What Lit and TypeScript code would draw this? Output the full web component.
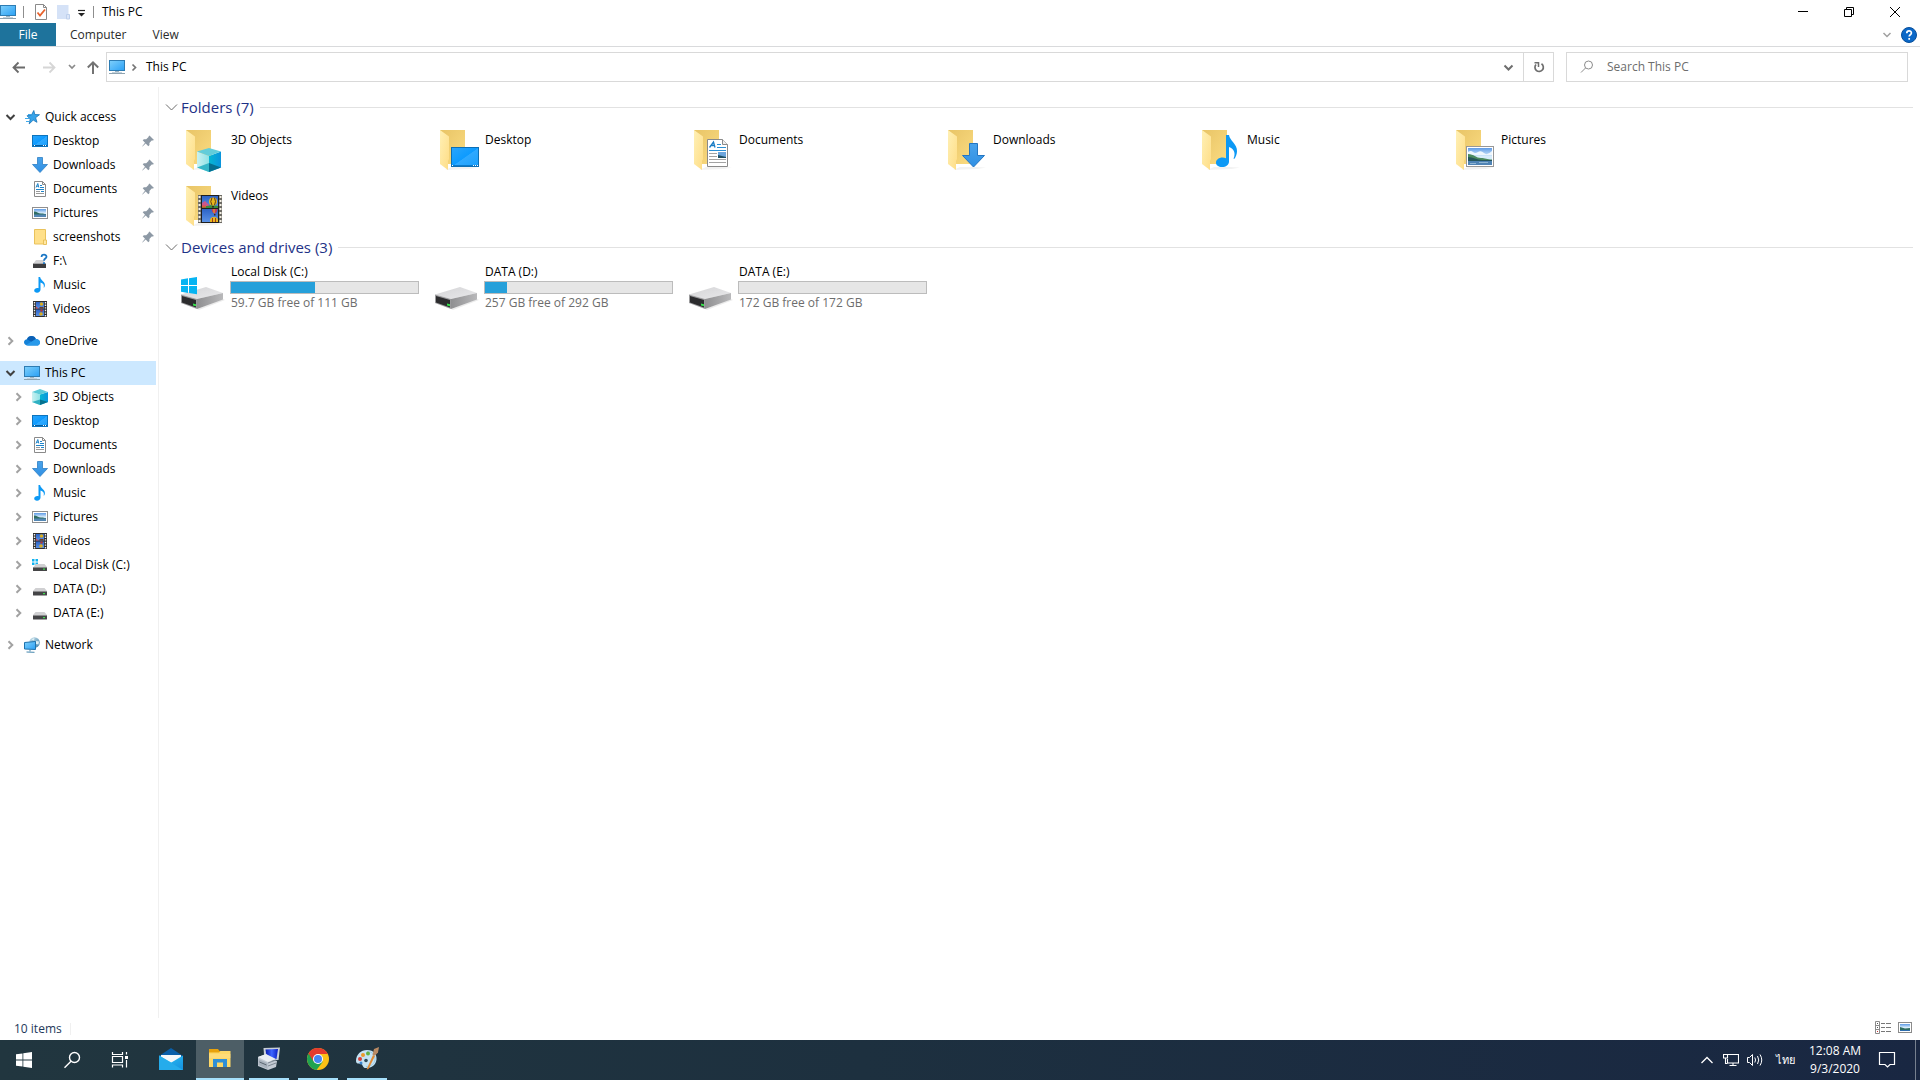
import { LitElement, html, svg, css } from "lit";
import { customElement } from "lit/decorators.js";
import { classMap } from "lit/directives/class-map.js";

/* ---------- shared drawings ---------- */

const defs = html`<svg class="defs" width="0" height="0" aria-hidden="true">
  <defs>
    <linearGradient id="screen" x1="0" y1="0" x2="1" y2="1"><stop offset="0" stop-color="#7fd0fb" /><stop offset="1" stop-color="#2aa0f5" /></linearGradient>
    <linearGradient id="flap" x1="0" y1="0" x2="1" y2="1"><stop offset="0" stop-color="#fff0b5" /><stop offset="1" stop-color="#fedd86" /></linearGradient>
    <linearGradient id="back" x1="0" y1="0" x2="1" y2="1"><stop offset="0" stop-color="#e8c466" /><stop offset="1" stop-color="#fbdc82" /></linearGradient>
    <linearGradient id="desk" x1="0" y1="0" x2="1" y2="1"><stop offset="0" stop-color="#2ba5fb" /><stop offset=".5" stop-color="#0d9bff" /><stop offset=".52" stop-color="#2fa9ff" /><stop offset="1" stop-color="#1a9ffc" /></linearGradient>
    <linearGradient id="cubeL" x1="0" y1="0" x2="1" y2="0"><stop offset="0" stop-color="#c9f1f1" /><stop offset="1" stop-color="#8fe2e6" /></linearGradient>
    <linearGradient id="cubeR" x1="0" y1="0" x2="1" y2="0"><stop offset="0" stop-color="#06b7d2" /><stop offset="1" stop-color="#0a94dd" /></linearGradient>
    <linearGradient id="arrow" x1="0" y1="0" x2="0" y2="1"><stop offset="0" stop-color="#4aa3ea" /><stop offset="1" stop-color="#2f8fe4" /></linearGradient>
    <linearGradient id="sky" x1="0" y1="0" x2="0" y2="1"><stop offset="0" stop-color="#5e9be6" /><stop offset=".5" stop-color="#d9edfb" /><stop offset="1" stop-color="#cfe6f5" /></linearGradient>
    <linearGradient id="film" x1="0" y1="0" x2="0" y2="1"><stop offset="0" stop-color="#2c63c6" /><stop offset="1" stop-color="#5b92e6" /></linearGradient>
    <linearGradient id="diskTop" x1="0" y1="0" x2="1" y2="1"><stop offset="0" stop-color="#d4d4d6" /><stop offset="1" stop-color="#e9e9eb" /></linearGradient>
    <linearGradient id="diskSide" x1="0" y1="0" x2="1" y2="0"><stop offset="0" stop-color="#8f8f91" /><stop offset="1" stop-color="#b9b9bb" /></linearGradient>
    <linearGradient id="mailL" x1="0" y1="0" x2="1" y2="1"><stop offset="0" stop-color="#2fc3f4" /><stop offset="1" stop-color="#1490df" /></linearGradient>
    <linearGradient id="crt" x1="0" y1="0" x2="1" y2="0"><stop offset="0" stop-color="#0a1cae" /><stop offset=".5" stop-color="#3e66ff" /><stop offset="1" stop-color="#0b20c4" /></linearGradient>
    <linearGradient id="globe" x1="0" y1="0" x2="1" y2="1"><stop offset="0" stop-color="#cfe6ef" /><stop offset="1" stop-color="#3c7fa8" /></linearGradient>
  </defs>
</svg>`;

const icon = (size: number, body: unknown, cls = "") =>
  html`<svg class=${"icon " + cls} width=${size} height=${size} viewBox="0 0 ${size} ${size}" aria-hidden="true">${body}</svg>`;

const small: Record<string, unknown> = {
  pc: svg`<rect x=".5" y="1.5" width="15" height="10" fill="url(#screen)" stroke="#2d7cb3"/><rect x="6" y="12" width="4" height="1" fill="#9fb4c2"/><rect x="3" y="13" width="10" height="1" fill="#c3d2dc"/><rect x="0" y="14" width="16" height="1" fill="#8fa3b0"/>`,
  star: svg`<path d="M9.800 1.500l1 4 4.700.2-3.900 3 1.400 4.600-3.800-2.200-4 3.800 1-4.900L3 6.800l4.600-1z" fill="#35a3ea" stroke="#1674b8" stroke-width=".8"/><path d="M1 9.500h4M2 12.500h3M4 5.500h3" stroke="#3fa9ea"/>`,
  desktop: svg`<rect x=".5" y="2.500" width="15" height="11" fill="url(#desk)" stroke="#0d74bd"/><path d="M1 12.500h14" stroke="#075c9c"/><path d="M2 12.500h1M11 12.500h1M13 12.500h1" stroke="#fff"/>`,
  downloads: svg`<path d="M5.500.5h5v7h5L8 15.500.5 7.500h5z" fill="url(#arrow)" stroke="#2d7fc4" stroke-width=".8"/>`,
  documents: svg`<path d="M2.500.5h8l3 3v12h-11z" fill="#fff" stroke="#8a8a8a"/><path d="M10.500.5v3h3" fill="none" stroke="#8a8a8a"/><path d="M4 6.500L5.800 2.500l1 4M4.600 5.200h2.200M8 4.500h2M8 6.500h4M4 8.500h8M9 10.500h3" stroke="#1f84c9" fill="none"/><path d="M4 10.500h4M4 12.500h8" stroke="#9a9a9a"/>`,
  pictures: svg`<rect x=".5" y="2.500" width="15" height="11" fill="#fff" stroke="#8f8f8f"/><rect x="2" y="4" width="12" height="8" fill="url(#sky)"/><path d="M2 6.500c3 0 4 2 7 2s3 .5 5 .5v1H2z" fill="#2f6d62"/><rect x="2" y="9.500" width="12" height="2.500" fill="#5487b4"/>`,
  folder: svg`<path d="M2.500 0.500h11v14.500h-11z" fill="#ffe08a" stroke="#e9c25c"/><path d="M11.500 15.500v-4.500h3v4.500z" fill="#ffe8a6" stroke="#e9c25c"/>`,
  unknown: svg`<path d="M4 7h7l3 4H1z" fill="#d3d3d5"/><rect x="1" y="11" width="13" height="4" fill="#3d3d3f"/><path d="M1 10.500h13" stroke="#a7a7a9"/><path d="M9.500 4c0-3 5-3 5-.3 0 2-2.500 1.800-2.500 4M12 9.200v1.800" stroke="#1b77c5" stroke-width="1.800" fill="none"/>`,
  music: svg`<path d="M6.500 0h1.600c.6 3.800 5.200 4.500 4.800 8.200-.1 1.300-.7 2.200-1.200 2.600.8-2.800-.6-4.400-3.200-5.200v7c0 2-1.500 3.200-3.500 3.200-1.700 0-2.800-.9-2.800-2.200 0-1.500 1.600-2.700 3.300-2.600.4 0 .7 0 1 .2z" fill="#0d99f5"/>`,
  videos: svg`<rect x="1" y="0" width="14" height="16" fill="#2e2e2e"/><rect x="4" y="1" width="8" height="6.500" fill="url(#film)"/><rect x="4" y="8.500" width="8" height="6.500" fill="url(#film)"/><circle cx="9.500" cy="3" r="1.800" fill="#d8ad22"/><path d="M4 5.500l2.500 2H4z" fill="#d8454a"/><path d="M7.500 6h4v1.500h-4z" fill="#6d3b22"/><circle cx="9" cy="13" r="1.800" fill="#d8ad22"/><circle cx="9.500" cy="9.500" r="1.300" fill="#a83a3b"/><path d="M2.500 1v15M13.500 1v15" stroke="#f2f2f2" stroke-width="1.400" stroke-dasharray="1.400 1.200"/>`,
  cloud: svg`<path d="M4 12.500C1.500 12.500 0 11.200 0 9.300 0 7.500 1.300 6.300 3 6.200 3.800 4 5.500 3 7.500 3c2 0 3.700 1.200 4.300 3 2.400 0 4.200 1.400 4.200 3.400s-1.500 3.100-3.300 3.100z" fill="#1482d8"/><path d="M3 6.200C3.800 4 5.500 3 7.500 3c2 0 3.700 1.200 4.300 3L8 9z" fill="#0b5fb4"/><path d="M2 12L11.800 6c2.400 0 4.200 1.400 4.200 3.400s-1.500 3.100-3.300 3.100H4c-.8 0-1.400-.2-2-.5z" fill="#2899ea"/>`,
  cube: svg`<path d="M0 3L8 5.500V16L0 13z" fill="url(#cubeL)"/><path d="M16 3L8 5.500V16l8-3z" fill="url(#cubeR)"/><path d="M0 3l8-3 8 3-8 2.500z" fill="#5bcbd8"/><path d="M0 13l8-2.500V16z" fill="#2fb0c2"/><path d="M16 13l-8-2.500V16z" fill="#05718f"/>`,
  cdrive: svg`<path d="M0 2h2.500v2.500H0zM3.500 2H6v2.500H3.500zM0 5.500h2.500V8H0zM3.500 5.500H6V8H3.500z" fill="#12b3f0"/><path d="M4 7h8.500l2.500 3H1.500z" fill="#d0d0d2"/><rect x="1" y="10" width="14" height="4" rx=".5" fill="#444446"/><path d="M1 10.500h14" stroke="#8c8c8e"/><rect x="11" y="11.500" width="2" height="1.200" fill="#3de04c"/>`,
  drive: svg`<path d="M3.500 7h9l2.500 3H1z" fill="#d0d0d2"/><rect x="1" y="10" width="14" height="4.500" rx=".5" fill="#444446"/><path d="M1 10.500h14" stroke="#8c8c8e"/><rect x="11" y="12" width="2" height="1.200" fill="#3de04c"/>`,
  network: svg`<circle cx="10.500" cy="5.500" r="5.300" fill="url(#globe)"/><path d="M7.500 2.500c1-1 2-1.500 3-1.500l-.5 2.500zM12 4l3 .5-.5 3L12 7z" fill="#dff0f5"/><path d="M.5 5.500l11-1v8l-11-.5z" fill="url(#screen)" stroke="#1d72ad"/><path d="M6 12.500v2M2.500 15l8 .300" stroke="#4587ad"/>`,
};

const pin = svg`<path d="M9.500 2.500L14 7l-1.300.6-1-.2-2.300 2.500.1 2.100-1.200 1.200-2.600-2.600L2.500 13.500l-.3-.3L5 9.800 2.700 7.300l1.200-1.100 2.300.1L8.500 4.100 8.700 3.200z" fill="#8d99a5"/>`;
const chevRight = svg`<path d="M5.500 4.200L9.300 8l-3.800 3.800" fill="none" stroke="#a2a2a2" stroke-width="2"/>`;
const chevDown = svg`<path d="M3.500 6l4 4 4-4" fill="none" stroke="#404040" stroke-width="2"/>`;
const chevThin = svg`<path d="M3 5.500L8.500 11 14 5.500" fill="none" stroke="#6d6d6d"/>`;

/* Folder tiles: an open folder with a badge drawn over its lower right. */
const folderBase = svg`<path d="M12 44l7-3h16l10 .5-8 1.500z" fill="#000" opacity=".05"/><path d="M7 4h25v34H12z" fill="url(#back)"/><path d="M7 4l9 6.500V33l-1 2v9l-8-6z" fill="url(#flap)"/>`;
const badge: Record<string, unknown> = {
  cube: svg`<path d="M18 25.500L30 30v16l-12-4.500z" fill="url(#cubeL)"/><path d="M42 25.500L30 30v16l12-4.500z" fill="url(#cubeR)"/><path d="M18 25.500L30 22l12 3.500L30 30z" fill="#62cdda"/><path d="M18 41.500L30 37v9z" fill="#35b7c8"/><path d="M42 41.500L30 37v9z" fill="#056f90"/>`,
  desktop: svg`<rect x="18.500" y="21.500" width="27" height="19" fill="url(#desk)" stroke="#0d6fb5"/><path d="M19 39.500h26" stroke="#0b7acb"/><path d="M19 39.500h1M40 39.500h1M42 39.500h1M44 39.500h1" stroke="#fff"/>`,
  documents: svg`<path d="M20.500 13.500h15l5 5v22h-20z" fill="#fff" stroke="#8a8a8a"/><path d="M35.500 13.500v5h5" fill="#eee" stroke="#8a8a8a"/><path d="M22.500 21.500l4-5.500 1.500 5.500M24.500 19.500h3" stroke="#1a7cc4" stroke-width="1.300" fill="none"/><path d="M30 18.500h4M30 21.500h9M22 24.500h17" stroke="#2a8fd4"/><path d="M22 27.500h8M22 30.500h8M22 33.500h17M22 36.500h17" stroke="#a3a3a3"/><rect x="31" y="26" width="8" height="6" fill="#6da5dc"/><path d="M31 29l8 2v1h-8z" fill="#1f4f63"/>`,
  downloads: svg`<path d="M28.500 17.500h8v12h7L32.500 41 21.500 29.500h7z" fill="url(#arrow)" stroke="#2476c2"/>`,
  music: svg`<path d="M31 9h3c.5 5.500 8.500 9 8 16.500-.1 2.800-1.200 5.500-2.800 7.500l-.7-.5c2.500-5 .5-10-4.500-11.500V35.500c0 3.500-3 5.500-7 5.500-3.500 0-6-1.700-6-4.300 0-3 3-5.200 6.500-5.200 1.400 0 2.600.2 3.500.7z" fill="#0d99f5"/>`,
  pictures: svg`<rect x="17.500" y="20.500" width="27" height="20" fill="#fff" stroke="#979797"/><rect x="19" y="22" width="24" height="17" fill="url(#sky)"/><path d="M19 26q3-2 5 0t5 0 6 1 8-2v4H19z" fill="#eef6fd"/><path d="M19 28c6 0 8 4 13 4 4 0 6 1.500 11 1.500V36H19z" fill="#4b8a5e"/><path d="M19 31c5 0 9 3 14 3h10v1.500H19z" fill="#25565a"/><rect x="19" y="35" width="24" height="4" fill="#4f83b4"/><path d="M21 37.500h6M30 36.500h9" stroke="#8db4d3"/>`,
  videos: svg`<rect x="19" y="13" width="24" height="28" fill="#6c6a64"/><rect x="22" y="13" width="18" height="28" fill="#1f1f1f"/><rect x="23" y="14" width="16" height="12" fill="url(#film)"/><rect x="23" y="27" width="16" height="13" fill="url(#film)"/><path d="M23 21l3-2 4 4 2 3h-9z" fill="#c9568e"/><path d="M23 24h5l5-1 6 1v2H23z" fill="#3b8c3e"/><path d="M23 23.500h4v2h-4z" fill="#e05a3a"/><circle cx="34" cy="19.500" r="4" fill="#e9b71d"/><path d="M33 15.700q-2.500 4 0 7.500M35.500 15.700q2 4 0 7.500" stroke="#5e3a1a" fill="none"/><path d="M33 24h2v1.500h-2z" fill="#3a2a1a"/><path d="M32.500 27h6q0 3-3 5-3-2-3-5z" fill="#c23b5a"/><path d="M35 27v4" stroke="#e9b71d"/><path d="M35 32h1.500v1.500H35z" fill="#3a2a1a"/><path d="M31 40q-.5-5 4-5t4 5z" fill="#e9b71d"/><path d="M33.500 36v4M36.500 36v4" stroke="#a33a1a"/><path d="M20.500 14v27M41.500 14v27" stroke="#f4f0e4" stroke-width="2" stroke-dasharray="2 2"/>`,
};

const winLogo = svg`<path d="M2 14.500l7-1.200V20H2zM10 13.200l8-1.200v8h-8zM2 21h7v7l-7-1.200zM10 21h8v8.200l-8-1.200z" fill="#06b4f2"/>`;
const diskArt = svg`<path d="M18 44l26-10 2 1-26 10z" fill="#000" opacity=".08"/><path d="M2 29.500L27 22l17 6-26 6z" fill="url(#diskTop)"/><path d="M18 34l26-6v6.500L18 44z" fill="url(#diskSide)"/><path d="M2 29.500L18 34v10L2 38z" fill="#9b9b9d"/><path d="M3 31l14 4v7.500L3 37.500z" fill="#2c2c2e"/><path d="M14 38.500l3 .8v2l-3-.9z" fill="#35e24a"/>`;

/* ---------- data ---------- */

interface NavEntry { label: string; art: string; level: 0 | 1; toggle?: "open" | "closed"; pinned?: boolean; selected?: boolean; }
const navGroups: NavEntry[][] = [
  [
    { label: "Quick access", art: "star", level: 0, toggle: "open" },
    { label: "Desktop", art: "desktop", level: 1, pinned: true },
    { label: "Downloads", art: "downloads", level: 1, pinned: true },
    { label: "Documents", art: "documents", level: 1, pinned: true },
    { label: "Pictures", art: "pictures", level: 1, pinned: true },
    { label: "screenshots", art: "folder", level: 1, pinned: true },
    { label: "F:\\", art: "unknown", level: 1 },
    { label: "Music", art: "music", level: 1 },
    { label: "Videos", art: "videos", level: 1 },
  ],
  [{ label: "OneDrive", art: "cloud", level: 0, toggle: "closed" }],
  [
    { label: "This PC", art: "pc", level: 0, toggle: "open", selected: true },
    { label: "3D Objects", art: "cube", level: 1, toggle: "closed" },
    { label: "Desktop", art: "desktop", level: 1, toggle: "closed" },
    { label: "Documents", art: "documents", level: 1, toggle: "closed" },
    { label: "Downloads", art: "downloads", level: 1, toggle: "closed" },
    { label: "Music", art: "music", level: 1, toggle: "closed" },
    { label: "Pictures", art: "pictures", level: 1, toggle: "closed" },
    { label: "Videos", art: "videos", level: 1, toggle: "closed" },
    { label: "Local Disk (C:)", art: "cdrive", level: 1, toggle: "closed" },
    { label: "DATA (D:)", art: "drive", level: 1, toggle: "closed" },
    { label: "DATA (E:)", art: "drive", level: 1, toggle: "closed" },
  ],
  [{ label: "Network", art: "network", level: 0, toggle: "closed" }],
];

const folders = [
  { label: "3D Objects", art: "cube" },
  { label: "Desktop", art: "desktop" },
  { label: "Documents", art: "documents" },
  { label: "Downloads", art: "downloads" },
  { label: "Music", art: "music" },
  { label: "Pictures", art: "pictures" },
  { label: "Videos", art: "videos" },
];

const drives = [
  { label: "Local Disk (C:)", free: "59.7 GB free of 111 GB", used: 45, system: true },
  { label: "DATA (D:)", free: "257 GB free of 292 GB", used: 12, system: false },
  { label: "DATA (E:)", free: "172 GB free of 172 GB", used: 0, system: false },
];

const apps = [
  {
    label: "Mail", state: "",
    body: svg`<path d="M0 8L12 0l12 8v3H0z" fill="#0a5ea8"/><path d="M2 7h20v4l-10 5L2 11z" fill="#f5f7f9"/><path d="M0 7.500l14 8L6 22H0z" fill="#31bff3"/><path d="M24 7.500L0 22h24z" fill="url(#mailL)"/><path d="M0 7.500L24 22H0z" fill="#25aceb"/>`,
  },
  {
    label: "File Explorer", state: "active",
    body: svg`<path d="M1 2h9l1.500 2H22v4H1z" fill="#e8a20c"/><path d="M1 5.500h10l1.500-1.500H22.500V20H1z" fill="#fdd868"/><path d="M1 7h21.500v4H1z" fill="#ffe08a" opacity=".5"/><path d="M5 20v-8h14v8h-4v-4.500H9V20z" fill="#2f8fd8"/>`,
  },
  {
    label: "Remote Desktop", state: "running",
    body: svg`<path d="M6.500 1L23 .5 21.500 13l-14 1z" fill="#c9d0d8"/><path d="M8.500 2.500l12.500-.5-1.500 10-9.500.5z" fill="url(#crt)"/><path d="M1 10l8-3 2 6 9 1-1 6-8 3-10-4z" fill="#c3cbd4"/><path d="M1 10l8-3 10 5-8 3z" fill="#e9edf1"/><path d="M1.500 12l9 4v6l-9-4z" fill="#a8b2bd"/><path d="M2.500 15l7 3" stroke="#5b6672"/><path d="M11 16l8-3M11 19l8-3" stroke="#7e8994"/>`,
  },
  {
    label: "Google Chrome", state: "running",
    body: svg`<circle cx="12" cy="12" r="11" fill="#fbc116"/><path d="M12 12L2.500 6.500A11 11 0 0 0 10.500 22.900L16.800 14.800z" fill="#1fa350"/><path d="M12 7h9.800A11 11 0 0 0 2.500 6.500L7.600 14.600z" fill="#e33b2e"/><circle cx="12" cy="12" r="5" fill="#fff"/><circle cx="12" cy="12" r="4" fill="#4486f4"/>`,
  },
  {
    label: "Paint", state: "running",
    body: svg`<path d="M12 3C19 3 22 7.500 21.500 12.500 21 17.500 17 21 11 21c-3 0-3-2-4-3.500S1 18 1 14C1 7.500 6 3 12 3z" fill="#c5e3f4"/><path d="M12 4.500C18 4.500 20 8.500 20 12.500s-4 7-9 7" fill="none" stroke="#9dcbe6"/><circle cx="8" cy="8" r="2" fill="#ec9a2c"/><circle cx="13" cy="6.500" r="2" fill="#62b245"/><circle cx="5" cy="12" r="2" fill="#d6423a"/><circle cx="11" cy="13.500" r="1.800" fill="#2d4a58"/><circle cx="6" cy="16" r="1.500" fill="#3a86d0"/><path d="M11.500 22.500L18 8l2 1-6.500 13z" fill="#e08b36"/><path d="M17.500 8L19 2l5-2-1 5.500-3 3z" fill="#b98a63"/>`,
  },
];

@customElement("app-root")
export class AppRoot extends LitElement {
  static styles = css`
    :host { display: flex; flex-direction: column; min-height: 100vh; background: #fff; color: #000; font-family: "Open Sans", "Noto Sans", sans-serif; font-size: 12px; line-height: 16px; }
    * { box-sizing: border-box; }
    button, input { font: inherit; color: inherit; border: 0; padding: 0; margin: 0; background: none; }
    button { display: flex; align-items: center; justify-content: center; }
    a { color: inherit; text-decoration: none; }
    ul { list-style: none; margin: 0; padding: 0; }
    h2 { margin: 0; font-weight: 400; }
    .defs { position: absolute; }
    .icon { display: block; flex: none; }
    .spacer { flex: 1; }

    .titlebar { display: flex; align-items: center; height: 23px; padding-right: 2px; }
    .quick { display: flex; align-items: center; }
    .quick .sep { width: 1px; height: 12px; background: #8e8e8e; }
    .quick .sep.first { margin: 0 10px 0 7px; }
    .quick .sep.last { margin: 0 8px 0 1px; }
    .quick button + button { margin-left: 6px; }
    .quick button.menu { margin-left: 4px; }
    .controls { display: flex; }
    .controls button { width: 46px; height: 21px; }

    .ribbon { display: flex; align-items: center; height: 24px; border-bottom: 1px solid #d9dadc; padding-right: 3px; color: #2b2b2b; }
    .tab { height: 23px; padding: 0 12px 0 14px; }
    .tab.file { width: 56px; padding: 0; background: #1e739c; color: #fff; }
    .ribbon .help { margin-left: 6px; }

    .navbar { display: flex; align-items: center; height: 40px; padding: 0 12px 0 11px; }
    .navbar .up { margin: 0 5px; }
    .navbar .forward { margin: 0 7px 0 14px; }
    .address { display: flex; flex: 1; height: 30px; border: 1px solid #d9d9d9; align-items: center; padding-left: 2px; }
    .address .crumb-toggle { width: 18px; }
    .address .crumb { margin-left: 3px; }
    .address .history { width: 30px; height: 28px; }
    .address .refresh { width: 30px; height: 28px; border-left: 1px solid #d9d9d9; }
    .search { display: flex; align-items: center; width: 342px; height: 30px; margin-left: 12px; border: 1px solid #d9d9d9; padding-left: 12px; gap: 12px; }
    .search input { flex: 1; min-width: 0; outline: none; }
    .search input::placeholder { color: #6d6d6d; opacity: 1; }

    .body { display: flex; flex: 1; }
    .tree { width: 159px; border-right: 1px solid #f0f0f0; padding: 18px 2px 0 0; }
    .tree ul + ul { margin-top: 8px; }
    .row { display: flex; align-items: center; height: 24px; padding: 0 0 0 3px; gap: 5px; }
    .row.child { padding-left: 11px; }
    .row.selected { background: #cce8ff; }
    .row .twist { width: 16px; height: 16px; flex: none; }
    .row a { flex: 1; white-space: nowrap; }

    .content { flex: 1; padding: 7px 7px 0 4px; min-width: 0; }
    .group-head { display: flex; align-items: center; height: 26px; gap: 2px; font-size: 15px; line-height: 20px; color: #1e3287; }
    .group-head::after { content: ""; flex: 1; height: 1px; margin-left: 4px; background: #e2e2e2; }
    .tiles { display: grid; grid-template-columns: repeat(auto-fill, 254px); padding: 2px 0 0 16px; }
    .tile { display: flex; height: 56px; padding-top: 4px; gap: 4px; }
    .tile .name { padding-top: 6px; }
    .drives { padding-top: 1px; }
    .drive { padding-top: 3px; }
    .drive .info { width: 189px; margin-left: -1px; }
    .drive .label, .drive .free { display: block; padding-left: 1px; line-height: 16px; }
    .drive .free { color: #6d6d6d; padding-top: 1px; }
    .drive .icon { margin-top: 1px; }
    .bar { display: block; height: 13px; margin-top: 1px; border: 1px solid #bcbcbc; background: #e6e6e6; }
    .fill { display: block; height: 100%; background: #26a0da; }

    .status { display: flex; align-items: center; height: 22px; padding: 0 7px 0 14px; color: #1e395b; }
    .status .count { padding-right: 8px; border-right: 1px solid #f0f0f0; line-height: 12px; }
    .status button + button { margin-left: 5px; }

    .taskbar { display: flex; height: 40px; background: linear-gradient(90deg, #21363f, #1d303f 45%, #192742); color: #fff; }
    .taskbar .system { display: flex; }
    .taskbar .system button, .apps button { width: 48px; height: 40px; }
    .apps { display: flex; gap: 1px; margin-left: 3px; }
    .apps .active { background: #4d5e66; border-bottom: 2px solid #a6e0fb; }
    .apps .running { width: 40px; margin: 0 4px; border-bottom: 2px solid #a6e0fb; }
    .tray { display: flex; align-items: center; }
    .tray button { height: 40px; width: 24px; }
    .tray .lang { width: 36px; font-size: 11px; }
    .tray .clock { flex-direction: column; width: 64px; line-height: 18px; }
    .tray .notes { width: 40px; }
    .tray .show-desktop { width: 5px; margin-left: 8px; border-left: 1px solid #76808f; }
  `;

  private navRow(e: NavEntry) {
    const cls = { row: true, child: e.level === 1, selected: !!e.selected };
    return html`<li class=${classMap(cls)}>
      ${e.toggle
        ? html`<button class="twist" aria-label="Toggle ${e.label}" aria-expanded=${e.toggle === "open"}>${icon(16, e.toggle === "open" ? chevDown : chevRight)}</button>`
        : html`<span class="twist"></span>`}
      ${icon(16, small[e.art])}
      <a href="#">${e.label}</a>
      ${e.pinned ? icon(16, pin) : ""}
    </li>`;
  }

  render() {
    return html`
      ${defs}
      <header class="titlebar">
        <div class="quick">
          ${icon(16, small.pc)}
          <span class="sep first"></span>
          <button aria-label="Properties">${icon(16, svg`<path d="M1.500.5h8l3 3v12h-11z" fill="#fff" stroke="#8a8a8a"/><path d="M9.500.5v3h3" fill="none" stroke="#8a8a8a"/><path d="M3.500 8.500l2.500 3 5-6" fill="none" stroke="#e8622c" stroke-width="1.800"/>`)}</button>
          <button aria-label="New folder">${icon(16, svg`<path d="M1 1h11.500v14H1z" fill="#d5e2f7"/><path d="M10.500 10.500h3v4.500h-3z" fill="#dbe6f8" stroke="#bfd0ec"/>`)}</button>
          <button class="menu" aria-label="Customize Quick Access Toolbar">${icon(16, svg`<path d="M2 6.500h7" stroke="#222" stroke-width="1.200"/><path d="M2 9h7l-3.500 3.500z" fill="#222"/>`)}</button>
          <span class="sep last"></span>
        </div>
        <span>This PC</span>
        <span class="spacer"></span>
        <div class="controls">
          <button aria-label="Minimize">${icon(12, svg`<path d="M1 5.500h10" stroke="#000"/>`)}</button>
          <button aria-label="Restore">${icon(12, svg`<path d="M1.500 3.500h7v7h-7zM3.500 3.500v-2h7v7h-2" fill="none" stroke="#000"/>`)}</button>
          <button aria-label="Close">${icon(12, svg`<path d="M1 1l10 10M11 1L1 11" stroke="#000"/>`)}</button>
        </div>
      </header>

      <div class="ribbon">
        <button class="tab file">File</button>
        <button class="tab">Computer</button>
        <button class="tab">View</button>
        <span class="spacer"></span>
        <button aria-label="Expand the Ribbon">${icon(16, svg`<path d="M4.500 6L8 9.500 11.500 6" fill="none" stroke="#a0a0a0" stroke-width="1.500"/>`)}</button>
        <button class="help" aria-label="Help">${icon(16, svg`<circle cx="8" cy="8" r="7.500" fill="#0b68c8" stroke="#084f9b"/><path d="M5.800 6.200c0-3 4.600-3 4.600-.2 0 1.800-2.200 1.600-2.200 3.500M8.200 11v1.800" fill="none" stroke="#fff" stroke-width="1.700"/>`)}</button>
      </div>

      <div class="navbar">
        <button aria-label="Back">${icon(16, svg`<path d="M2.500 8.500H14M7.500 3.500l-5 5 5 5" fill="none" stroke="#6b6b6b" stroke-width="1.800"/>`)}</button>
        <button class="forward" aria-label="Forward">${icon(16, svg`<path d="M2 8.500h11.500M8.500 3.500l5 5-5 5" fill="none" stroke="#d6d6d6" stroke-width="1.800"/>`)}</button>
        <button aria-label="Recent locations">${icon(16, svg`<path d="M5 6l3 3 3-3" fill="none" stroke="#8a8a8a" stroke-width="1.700"/>`)}</button>
        <button class="up" aria-label="Up">${icon(16, svg`<path d="M8 15V3M2.800 8.500L8 3.300l5.200 5.200" fill="none" stroke="#737373" stroke-width="2"/>`)}</button>
        <div class="address">
          ${icon(16, small.pc)}
          <button class="crumb-toggle" aria-label="Show locations">${icon(16, svg`<path d="M6.500 5.500L9.500 8.500l-3 3" fill="none" stroke="#757575" stroke-width="1.700"/>`)}</button>
          <button class="crumb">This PC</button>
          <span class="spacer"></span>
          <button class="history" aria-label="Previous locations">${icon(16, svg`<path d="M4.500 6.500l4 4 4-4" fill="none" stroke="#6e6e6e" stroke-width="2"/>`)}</button>
          <button class="refresh" aria-label="Refresh">${icon(16, svg`<path d="M10.500 4.800A4.200 4.200 0 1 1 5 5.500" fill="none" stroke="#6e6e6e" stroke-width="1.700"/><path d="M3.500 3.800h4V8" fill="none" stroke="#6e6e6e" stroke-width="1.500"/>`)}</button>
        </div>
        <label class="search">
          ${icon(16, svg`<circle cx="9.500" cy="6" r="4" fill="none" stroke="#8c8c8c"/><path d="M6.500 9L2 13.500" stroke="#8c8c8c"/>`)}
          <input type="search" placeholder="Search This PC" aria-label="Search This PC" />
        </label>
      </div>

      <div class="body">
        <nav class="tree" aria-label="Navigation pane">
          ${navGroups.map((g) => html`<ul>${g.map((e) => this.navRow(e))}</ul>`)}
        </nav>
        <main class="content">
          <h2 class="group-head">${icon(16, chevThin)}Folders (7)</h2>
          <div class="tiles">
            ${folders.map((f) => html`<a class="tile" href="#">${icon(48, svg`${folderBase}${badge[f.art]}`)}<span class="name">${f.label}</span></a>`)}
          </div>
          <h2 class="group-head">${icon(16, chevThin)}Devices and drives (3)</h2>
          <div class="tiles drives">
            ${drives.map((d) => html`<a class="tile drive" href="#">
              ${icon(48, svg`${diskArt}${d.system ? winLogo : ""}`)}
              <span class="info">
                <span class="label">${d.label}</span>
                <span class="bar"><span class="fill" style="width:${d.used}%"></span></span>
                <span class="free">${d.free}</span>
              </span></a>`)}
          </div>
        </main>
      </div>

      <div class="status">
        <span class="count">10 items</span>
        <span class="spacer"></span>
        <button aria-label="Details view">${icon(18, svg`<path d="M1.500 1.500h4v12h-4zM1.500 5.500h4M1.500 9.500h4" fill="none" stroke="#8b8b8b"/><path d="M3 3.500h1M3 7.500h1" stroke="#555"/><path d="M3 11.500h1" stroke="#c33"/><path d="M7 3.500h4M12 3.500h5M7 7.500h4M12 7.500h5M7 11.500h4M12 11.500h5" stroke="#777"/>`)}</button>
        <button aria-label="Large icons view">${icon(16, svg`<rect x="1.500" y="1.500" width="13" height="10" fill="#fff" stroke="#8b8b8b"/><rect x="3" y="3" width="10" height="7" fill="url(#sky)"/><path d="M3 6l5 1.500 5-.5v2H3z" fill="#2f6d62"/><path d="M3 9.500h10" stroke="#2e6dad"/>`)}</button>
      </div>

      <footer class="taskbar">
        <div class="system">
          <button aria-label="Start">${icon(16, svg`<path d="M0 2.300L6.500 1.400V7.600H0zM7.300 1.300L16 0v7.600H7.300zM0 8.400h6.500v6.200L0 13.700zM7.300 8.400H16V16l-8.700-1.300z" fill="#fff"/>`)}</button>
          <button aria-label="Search">${icon(18, svg`<circle cx="11.500" cy="6.500" r="5" fill="none" stroke="#fff" stroke-width="1.400"/><path d="M8 10.200L1.500 16.700" stroke="#fff" stroke-width="1.400"/>`)}</button>
          <button aria-label="Task View">${icon(18, svg`<path d="M1.500 1v2.500h10V1M1.500 16.500V14h10v2.500M1.500 5.500h10v6h-10zM15.500 1v2.500M15.500 9v7.500" fill="none" stroke="#fff" stroke-width="1.200"/><rect x="14" y="5" width="3" height="3" fill="#fff"/>`)}</button>
        </div>
        <div class="apps">
          ${apps.map((a) => html`<button class=${a.state} aria-label=${a.label}>${icon(24, a.body)}</button>`)}
        </div>
        <span class="spacer"></span>
        <div class="tray">
          <button aria-label="Show hidden icons">${icon(16, svg`<path d="M2.500 11L8 5.500l5.500 5.500" fill="none" stroke="#fff" stroke-width="1.300"/>`)}</button>
          <button aria-label="Network">${icon(16, svg`<path d="M5 2.500h10.500v8.500H4.500V7M10 11v2.500M6.500 13.500h7M.5 2.500h4v3.500h-4zM2.500 6v5.500h2" fill="none" stroke="#fff" stroke-width="1.100"/>`)}</button>
          <button aria-label="Volume">${icon(16, svg`<path d="M.5 5.500h2l3-3v11l-3-3h-2z" fill="none" stroke="#fff"/><path d="M7.800 5.500q1.500 2.500 0 5M10.500 4q2.500 4 0 8M13 2.500q3.500 5.500 0 11" fill="none" stroke="#fff"/>`)}</button>
          <button class="lang" lang="th">ไทย</button>
          <button class="clock"><span>12:08 AM</span><span>9/3/2020</span></button>
          <button class="notes" aria-label="Notifications">${icon(18, svg`<path d="M1.500 1.500h15v12H12l-2.500 2.500L7 13.500H1.500z" fill="none" stroke="#fff" stroke-width="1.200"/>`)}</button>
          <button class="show-desktop" aria-label="Show desktop"></button>
        </div>
      </footer>
    `;
  }
}
